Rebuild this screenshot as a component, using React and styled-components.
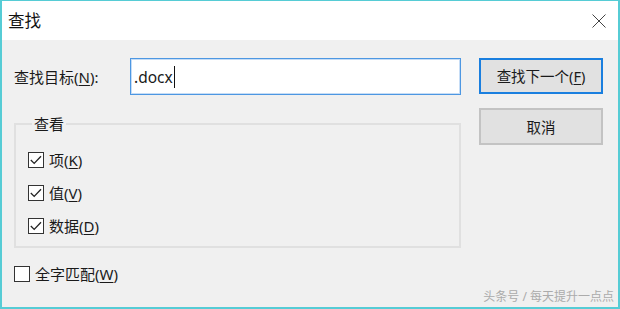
import React from 'react';
import styled, { createGlobalStyle } from 'styled-components';

const GlobalStyle = createGlobalStyle`
  html, body {
    margin: 0;
    padding: 0;
    background: #f0f0f0;
  }
  * {
    box-sizing: border-box;
  }
`;

const Dialog = styled.div`
  position: relative;
  width: 620px;
  height: 309px;
  border: 2px solid #56ccd5;
  border-top-width: 1px;
  background: #f0f0f0;
  font-family: "Noto Sans", "Noto Sans CJK SC", sans-serif;
  font-size: 15px;
  color: #1a1a1a;
  display: flex;
  flex-direction: column;
  overflow: hidden;
`;

const TitleBar = styled.div`
  height: 39px;
  flex: none;
  background: #fff;
  display: flex;
  align-items: center;
  justify-content: space-between;
  padding: 0 11px 0 6px;
`;

const Title = styled.div`
  font-size: 16.5px;
  line-height: 20px;
  color: #111;
`;

const CloseButton = styled.div`
  width: 16px;
  height: 16px;
  display: flex;
  align-items: center;
  justify-content: center;
`;

const Body = styled.div`
  flex: 1;
  display: flex;
  gap: 18px;
  padding: 18px 0 0 12px;
`;

const LeftColumn = styled.div`
  width: 447px;
  display: flex;
  flex-direction: column;
`;

const RightColumn = styled.div`
  width: 124px;
  display: flex;
  flex-direction: column;
  gap: 14px;
`;

const FieldRow = styled.div`
  display: flex;
  align-items: center;
  height: 37px;
`;

const Label = styled.label`
  width: 116px;
  flex: none;
  font-size: 15px;
  line-height: 20px;
`;

const Key = styled.span`
  text-decoration: underline;
  text-underline-offset: 2px;
`;

const TextBox = styled.div`
  flex: 1;
  height: 37px;
  background: #fff;
  border: 1px solid #4d97e2;
  box-shadow: inset 0 0 0 1px #c6ddf6;
  display: flex;
  align-items: center;
  padding-left: 3px;
  font-size: 15.5px;
`;

const Caret = styled.span`
  display: inline-block;
  width: 1px;
  height: 22px;
  margin-left: 1px;
  background: #111;
`;

const GroupBox = styled.fieldset`
  margin: 19px 0 0 0;
  padding: 16px 0 0 12px;
  height: 134px;
  border: 2px solid #e0e0e0;
  display: flex;
  flex-direction: column;
  gap: 13px;
  min-width: 0;
`;

const Legend = styled.legend`
  padding: 0 2px;
  margin-left: 4px;
  font-size: 15px;
  line-height: 20px;
`;

const CheckRow = styled.div`
  display: flex;
  align-items: center;
  gap: 5px;
  height: 20px;
  margin-top: ${p => p.$top || 0}px;
`;

const Box = styled.span`
  width: 16px;
  height: 16px;
  flex: none;
  border: 1px solid #333;
  background: #fff;
  display: flex;
  align-items: center;
  justify-content: center;
`;

const CheckText = styled.span`
  font-size: 15px;
  line-height: 20px;
`;

const Button = styled.div`
  height: ${p => (p.$primary ? 36 : 37)}px;
  background: #e1e1e1;
  border: 2px solid ${p => (p.$primary ? '#1a7fdf' : '#c3c3c3')};
  display: flex;
  align-items: center;
  justify-content: center;
  font-size: 14.5px;
  line-height: 20px;
`;

const Watermark = styled.div`
  position: absolute;
  right: 4px;
  bottom: 3px;
  font-size: 12px;
  line-height: 14px;
  color: #ababab;
`;

const Check = ({ checked, children, top }) => (
  <CheckRow $top={top}>
    <Box>
      {checked && (
        <svg width="12" height="10" viewBox="0 0 12 10">
          <polyline points="0.8,5 4.2,8.4 11,1.2" fill="none" stroke="#222" strokeWidth="1.3" />
        </svg>
      )}
    </Box>
    <CheckText>{children}</CheckText>
  </CheckRow>
);

export default function App() {
  return (
    <>
      <GlobalStyle />
      <Dialog>
        <TitleBar>
          <Title>查找</Title>
          <CloseButton>
            <svg width="14" height="14" viewBox="0 0 14 14">
              <path d="M0.5 0.5 L13.5 13.5 M13.5 0.5 L0.5 13.5" stroke="#444" strokeWidth="1" fill="none" />
            </svg>
          </CloseButton>
        </TitleBar>
        <Body>
          <LeftColumn>
            <FieldRow>
              <Label>查找目标(<Key>N</Key>):</Label>
              <TextBox>
                .docx<Caret />
              </TextBox>
            </FieldRow>
            <GroupBox>
              <Legend>查看</Legend>
              <Check checked>项(<Key>K</Key>)</Check>
              <Check checked>值(<Key>V</Key>)</Check>
              <Check checked>数据(<Key>D</Key>)</Check>
            </GroupBox>
            <Check top={16}>全字匹配(<Key>W</Key>)</Check>
          </LeftColumn>
          <RightColumn>
            <Button $primary>查找下一个(<Key>F</Key>)</Button>
            <Button>取消</Button>
          </RightColumn>
        </Body>
        <Watermark>头条号 / 每天提升一点点</Watermark>
      </Dialog>
    </>
  );
}
